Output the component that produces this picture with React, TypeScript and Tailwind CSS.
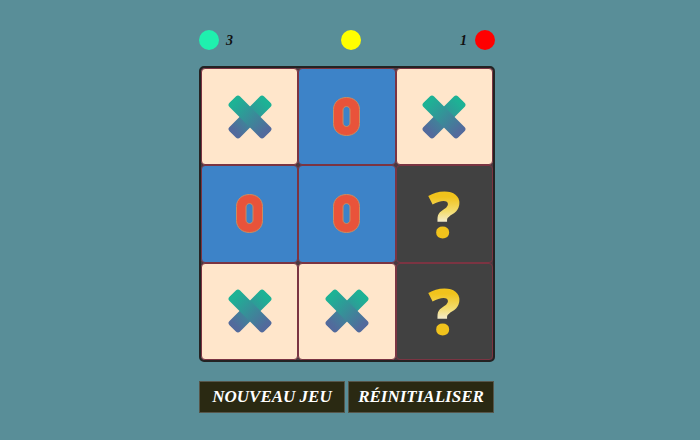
import React from "react";

type Cell = "X" | "O" | "?";

const cells: Cell[] = ["X", "O", "X", "O", "O", "?", "X", "X", "?"];

function XIcon({ id }: { id: string }) {
  return (
    <svg width="48" height="48" viewBox="0 0 48 48">
      <defs>
        <linearGradient id={id} x1="0" y1="3" x2="0" y2="45" gradientUnits="userSpaceOnUse">
          <stop offset="0" stopColor="#1db295" />
          <stop offset="1" stopColor="#526a9c" />
        </linearGradient>
      </defs>
      <g fill={`url(#${id})`}>
        <rect x="16.5" y="-0.5" width="15" height="49" rx="3" transform="rotate(45 24 24)" />
        <rect x="16.5" y="-0.5" width="15" height="49" rx="3" transform="rotate(-45 24 24)" />
      </g>
    </svg>
  );
}

function OIcon() {
  return (
    <svg width="27" height="39" viewBox="0 0 27 39">
      <path
        d="M13.5 0.5 C6.5 0.5 0.5 5 0.5 12.5 L0.5 26.5 C0.5 34 6.5 38.5 13.5 38.5 C20.5 38.5 26.5 34 26.5 26.5 L26.5 12.5 C26.5 5 20.5 0.5 13.5 0.5 Z M13.5 9.5 C15.5 9.5 17 11 17 13 L17 26 C17 28 15.5 29.5 13.5 29.5 C11.5 29.5 10 28 10 26 L10 13 C10 11 11.5 9.5 13.5 9.5 Z"
        fill="#e9533a"
        fillRule="evenodd"
        stroke="#c98d62"
        strokeWidth="1"
      />
    </svg>
  );
}

function QIcon() {
  return (
    <span
      className="block h-[66px] leading-[66px] font-extrabold text-transparent bg-clip-text bg-[linear-gradient(to_bottom,#f1c31c_0%,#f1c31c_24%,#f3dc6e_46%,#f5f1e6_66%,#f1c31c_69%,#f1c31c_100%)]"
      style={{ fontFamily: '"Open Sans", "DejaVu Sans", sans-serif', fontSize: "64px" }}
    >
      ?
    </span>
  );
}

function CellView({ v, i }: { v: Cell; i: number }) {
  const bg = v === "X" ? "bg-[#ffe6cb]" : v === "O" ? "bg-[#3d83c8]" : "bg-[#414141]";
  return (
    <div className={`${bg} border border-[#7b3442] rounded-[4px] flex items-center justify-center`}>
      {v === "X" ? <XIcon id={`xg${i}`} /> : v === "O" ? <OIcon /> : <QIcon />}
    </div>
  );
}

export default function App() {
  const serif = { fontFamily: '"Liberation Serif", "DejaVu Serif", serif' };
  return (
    <div className="w-[700px] h-[440px] bg-[#598e98] flex justify-center pr-[6px] overflow-hidden">
      <div className="w-[296px] flex flex-col pt-[30px]">
        <div className="flex items-center justify-between h-[20px]">
          <div className="flex items-center gap-[7px]">
            <div className="w-[20px] h-[20px] rounded-full bg-[#1ff0ae]" />
            <span className="text-[14px] font-bold italic text-[#111]" style={serif}>3</span>
          </div>
          <div className="w-[20px] h-[20px] rounded-full bg-[#ffff00] ml-[8px]" />
          <div className="flex items-center gap-[8px]">
            <span className="text-[14px] font-bold italic text-[#111]" style={serif}>1</span>
            <div className="w-[20px] h-[20px] rounded-full bg-[#ff0000]" />
          </div>
        </div>
        <div className="mt-[16px] w-[296px] h-[296px] border-2 border-[#232323] rounded-[5px] bg-[#4a3940] grid grid-cols-3 grid-rows-3 overflow-hidden">
          {cells.map((c, i) => (
            <CellView key={i} v={c} i={i} />
          ))}
        </div>
        <div className="mt-[19px] flex gap-[3px]">
          <button
            className="w-[146px] h-[32px] bg-[#2a2912] border border-[#56564a] text-white text-[17px] font-bold italic"
            style={serif}
          >
            NOUVEAU JEU
          </button>
          <button
            className="w-[146px] h-[32px] bg-[#2a2912] border border-[#56564a] text-white text-[17px] font-bold italic"
            style={serif}
          >
            RÉINITIALISER
          </button>
        </div>
      </div>
    </div>
  );
}
